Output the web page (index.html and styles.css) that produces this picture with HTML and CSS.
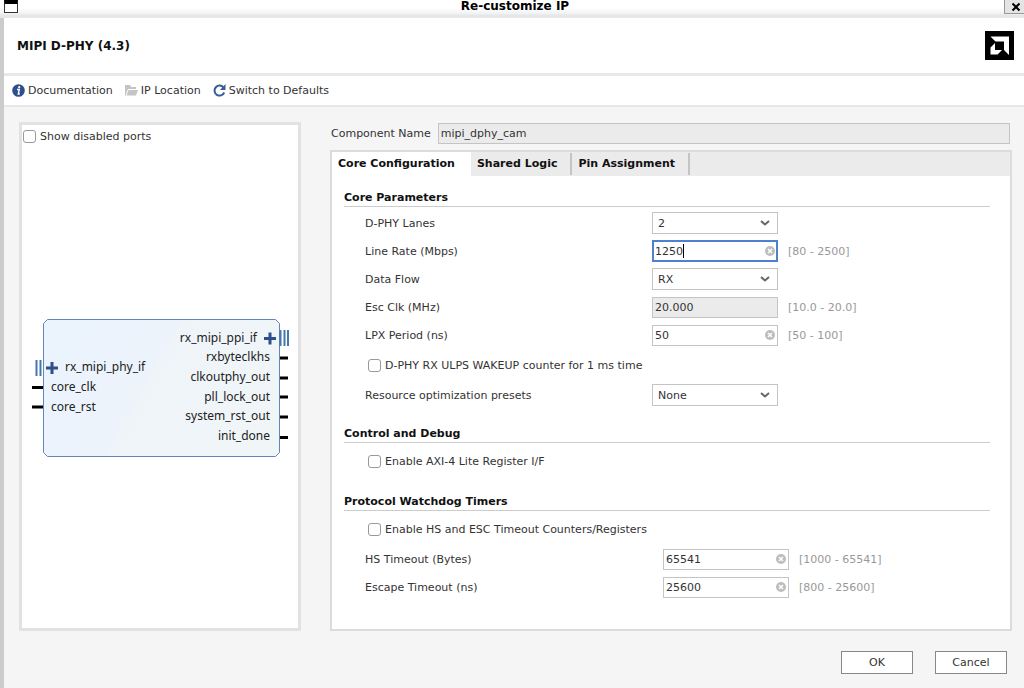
FILE: index.html
```html
<!DOCTYPE html>
<html lang="en">
<head>
    <meta charset="UTF-8">
    <meta name="viewport" content="width=device-width, initial-scale=1.0">
    <title>Re-customize IP</title>
    <link rel="stylesheet" href="styles.css">
</head>
<body>
    <header class="titlebar">
        <span class="window-menu"></span>
        <h1 class="window-title">Re-customize IP</h1>
        <button class="window-close" type="button" aria-label="Close">
            <svg width="10" height="10" viewBox="0 0 10 10"><path d="M1.500 1.500L8.500 8.500M8.500 1.500L1.500 8.500" stroke="#000" stroke-width="2"/></svg>
        </button>
    </header>

    <div class="dialog">
        <section class="product">
            <h2>MIPI D-PHY (4.3)</h2>
            <svg class="logo" width="29" height="29" viewBox="0 0 29 29">
                <rect width="29" height="29" fill="#000"/>
                <path d="M5.500 5.500H24V24L19 19V10.500H10.500Z" fill="#fff"/>
                <path d="M10 12V19H17L12.500 23.500H5.500V16.500Z" fill="#fff"/>
            </svg>
        </section>

        <nav class="toolbar">
            <a href="#documentation">
                <svg width="13" height="13" viewBox="0 0 13 13"><circle cx="6.500" cy="6.500" r="6.300" fill="#2f4e8c"/><circle cx="7.200" cy="3.200" r="1.100" fill="#fff"/><path d="M5 5.500H7.300L6.300 10H7.800" fill="none" stroke="#fff" stroke-width="1.400"/></svg>
                Documentation
            </a>
            <a href="#location">
                <svg width="13" height="11" viewBox="0 0 13 11"><path d="M0 0H5L6 2H11V4H3L1 9V10.500H0Z" fill="#c4c4c4"/><path d="M3.500 5H13L11 10.500H1.500Z" fill="#c4c4c4"/></svg>
                IP Location
            </a>
            <a href="#defaults">
                <svg width="13" height="13" viewBox="0 0 13 13"><path d="M10.500 3.500A5 5 0 1 0 11.200 8.500" fill="none" stroke="#3a5c9c" stroke-width="2"/><path d="M12.500 0V6H7Z" fill="#3a5c9c"/></svg>
                Switch to Defaults
            </a>
        </nav>

        <main class="content">
            <section class="preview">
                <label class="check"><input type="checkbox"> Show disabled ports</label>
                <div class="canvas">
                    <svg class="symbol" width="258" height="140" viewBox="0 0 258 140">
                        <defs>
                            <linearGradient id="fill" gradientUnits="userSpaceOnUse" x1="13" y1="20" x2="210" y2="130">
                                <stop offset="0" stop-color="#ebf3fd"/>
                                <stop offset="0.490" stop-color="#ecf3fb"/>
                                <stop offset="0.500" stop-color="#eff4f9"/>
                                <stop offset="1" stop-color="#f0f5f8"/>
                            </linearGradient>
                        </defs>
                        <path d="M16.500 1.500H244.500L248.500 5.500V134.500L244.500 138.500H16.500L12.500 134.500V5.500Z" fill="url(#fill)" stroke="#6384bd"/>
                        <!-- bus ports -->
                        <path d="M5.500 42V58M9.500 42V58M249.500 12V28M253.500 12V28M257 12V28" stroke="#4677ad" stroke-width="2"/>
                        <path d="M15 50H27M21 44V56M233 20.500H245M239 14.500V26.500" stroke="#2f4e8c" stroke-width="3"/>
                        <!-- single pins -->
                        <path d="M1 69.500H12M1 89H12M249 40H257M249 60H257M249 79H257M249 99H257M249 119.500H257" stroke="#000" stroke-width="3"/>
                        <g class="port">
                            <text x="34" y="53">rx_mipi_phy_if</text>
                            <text x="20" y="73">core_clk</text>
                            <text x="20" y="93">core_rst</text>
                        </g>
                        <g class="port port-out">
                            <text x="226" y="24">rx_mipi_ppi_if</text>
                            <text x="239" y="43">rxbyteclkhs</text>
                            <text x="239" y="63">clkoutphy_out</text>
                            <text x="239" y="83">pll_lock_out</text>
                            <text x="239" y="102">system_rst_out</text>
                            <text x="239" y="122">init_done</text>
                        </g>
                    </svg>
                </div>
            </section>

            <section class="settings">
                <div class="component">
                    <label for="component">Component Name</label>
                    <input class="field" id="component" type="text" value="mipi_dphy_cam" readonly>
                </div>

                <div class="tab-panel">
                    <div class="tabs">
                        <button class="tab active" type="button">Core Configuration</button>
                        <button class="tab" type="button">Shared Logic</button>
                        <button class="tab" type="button">Pin Assignment</button>
                    </div>

                    <form class="groups">
                        <section class="group">
                            <h3>Core Parameters</h3>
                            <div class="row">
                                <label for="lanes">D-PHY Lanes</label>
                                <div class="control">
                                    <select class="field" id="lanes"><option>1</option><option selected>2</option><option>4</option></select>
                                    <svg class="arrow" width="10" height="6" viewBox="0 0 10 6"><path d="M1 1L5 4.500L9 1" fill="none" stroke="#666" stroke-width="2"/></svg>
                                </div>
                            </div>
                            <div class="row">
                                <label for="rate">Line Rate (Mbps)</label>
                                <div class="control focused">
                                    <input class="field" id="rate" type="text" value="1250">
                                    <span class="caret"></span>
                                    <button class="clear" type="button" aria-label="Clear"><svg width="10" height="10" viewBox="0 0 10 10"><circle cx="5" cy="5" r="5" fill="#bdbdbd"/><path d="M3 3L7 7M7 3L3 7" stroke="#fff" stroke-width="1.500"/></svg></button>
                                </div>
                                <span class="range">[80 - 2500]</span>
                            </div>
                            <div class="row">
                                <label for="flow">Data Flow</label>
                                <div class="control">
                                    <select class="field" id="flow"><option>RX</option><option>TX</option></select>
                                    <svg class="arrow" width="10" height="6" viewBox="0 0 10 6"><path d="M1 1L5 4.500L9 1" fill="none" stroke="#666" stroke-width="2"/></svg>
                                </div>
                            </div>
                            <div class="row">
                                <label for="esc">Esc Clk (MHz)</label>
                                <div class="control">
                                    <input class="field" id="esc" type="text" value="20.000" readonly>
                                </div>
                                <span class="range">[10.0 - 20.0]</span>
                            </div>
                            <div class="row">
                                <label for="lpx">LPX Period (ns)</label>
                                <div class="control">
                                    <input class="field" id="lpx" type="text" value="50">
                                    <button class="clear" type="button" aria-label="Clear"><svg width="10" height="10" viewBox="0 0 10 10"><circle cx="5" cy="5" r="5" fill="#bdbdbd"/><path d="M3 3L7 7M7 3L3 7" stroke="#fff" stroke-width="1.500"/></svg></button>
                                </div>
                                <span class="range">[50 - 100]</span>
                            </div>
                            <label class="check"><input type="checkbox"> D-PHY RX ULPS WAKEUP counter for 1 ms time</label>
                            <div class="row">
                                <label for="presets">Resource optimization presets</label>
                                <div class="control">
                                    <select class="field" id="presets"><option>None</option></select>
                                    <svg class="arrow" width="10" height="6" viewBox="0 0 10 6"><path d="M1 1L5 4.500L9 1" fill="none" stroke="#666" stroke-width="2"/></svg>
                                </div>
                            </div>
                        </section>

                        <section class="group">
                            <h3>Control and Debug</h3>
                            <label class="check"><input type="checkbox"> Enable AXI-4 Lite Register I/F</label>
                        </section>

                        <section class="group timers">
                            <h3>Protocol Watchdog Timers</h3>
                            <label class="check"><input type="checkbox"> Enable HS and ESC Timeout Counters/Registers</label>
                            <div class="row">
                                <label for="hs">HS Timeout (Bytes)</label>
                                <div class="control">
                                    <input class="field" id="hs" type="text" value="65541">
                                    <button class="clear" type="button" aria-label="Clear"><svg width="10" height="10" viewBox="0 0 10 10"><circle cx="5" cy="5" r="5" fill="#bdbdbd"/><path d="M3 3L7 7M7 3L3 7" stroke="#fff" stroke-width="1.500"/></svg></button>
                                </div>
                                <span class="range">[1000 - 65541]</span>
                            </div>
                            <div class="row">
                                <label for="escape">Escape Timeout (ns)</label>
                                <div class="control">
                                    <input class="field" id="escape" type="text" value="25600">
                                    <button class="clear" type="button" aria-label="Clear"><svg width="10" height="10" viewBox="0 0 10 10"><circle cx="5" cy="5" r="5" fill="#bdbdbd"/><path d="M3 3L7 7M7 3L3 7" stroke="#fff" stroke-width="1.500"/></svg></button>
                                </div>
                                <span class="range">[800 - 25600]</span>
                            </div>
                        </section>
                    </form>
                </div>
            </section>
        </main>

        <footer class="actions">
            <button type="button">OK</button>
            <button type="button">Cancel</button>
        </footer>
    </div>
</body>
</html>
```
FILE: styles.css
```css
html{
    box-sizing: border-box;
    font-family: "DejaVu Sans", sans-serif;
    font-size: 11px;
    color: #333;
}

*, *::after, *::before{
    box-sizing: inherit;
}

body{
    display: flex;
    flex-direction: column;
    min-height: 100vh;
    margin: 0;
}

h1, h2, h3{
    margin: 0;
    color: #111;
}

button, input, select{
    font: inherit;
    color: inherit;
    margin: 0;
}

svg{
    display: block;
}

/* Title bar */
.titlebar{
    display: flex;
    justify-content: space-between;
    align-items: flex-start;
    height: 18px;
    padding-left: 4px;
    background: linear-gradient(#fff 8px, #eff1f4 14px, #e6e7e6 15px);
}

.window-menu{
    width: 14px;
    height: 13px;
    border: 1px solid #333;
    border-top: 4px solid #000;
    background-color: #fff;
}

.window-title{
    padding-left: 8px;
    font-size: 12px;
    line-height: 12px;
    color: #000;
}

.window-close{
    display: flex;
    justify-content: center;
    align-items: center;
    width: 20px;
    height: 14px;
    padding: 0 0 0 3px;
    border: 1px solid #999;
    border-width: 0 0 1px 1px;
    background-color: #e4e4e4;
}

/* Dialog */
.dialog{
    display: flex;
    flex-direction: column;
    flex-grow: 1;
    border-left: 4px solid #ccc;
    background-color: #f5f5f5;
}

.product{
    display: flex;
    justify-content: space-between;
    align-items: center;
    height: 58px;
    padding: 0 10px 0 13px;
    border-bottom: 3px solid #e8e8e8;
    background-color: #fff;
}

.product h2{
    font-size: 12px;
}

.toolbar{
    display: flex;
    align-items: center;
    gap: 12px;
    height: 31px;
    padding-left: 8px;
    border-bottom: 2px solid #e8e8e8;
    background-color: #fff;
}

.toolbar a{
    display: flex;
    align-items: center;
    gap: 3px;
    color: #333;
    text-decoration: none;
}

.content{
    display: flex;
    flex-grow: 1;
    gap: 29px;
    padding: 15px 12px 0 15px;
}

/* Symbol preview */
.preview{
    display: flex;
    flex-direction: column;
    flex: 0 0 282px;
    border: 3px solid #e2e2e2;
    background-color: #fff;
}

.canvas{
    display: flex;
    flex-grow: 1;
    justify-content: center;
    align-items: center;
}

.port{
    font-family: "Noto Sans", sans-serif;
    font-size: 12px;
    fill: #222;
}

.port-out{
    text-anchor: end;
}

.check{
    display: flex;
    align-items: center;
    gap: 4px;
    height: 22px;
    padding-left: 1px;
}

.check input{
    appearance: none;
    width: 13px;
    height: 13px;
    border: 1px solid #999;
    border-radius: 3px;
    background-color: #fff;
}

/* Settings */
.settings{
    display: flex;
    flex-direction: column;
    flex-grow: 1;
}

.component{
    display: flex;
    align-items: center;
    gap: 7px;
    height: 23px;
    padding: 0 2px 0 1px;
}

.component .field{
    flex-grow: 1;
}

.field{
    height: 21px;
    padding: 0 2px;
    border: 1px solid #c4c4c4;
    border-radius: 0;
    outline: 0;
    background-color: #fff;
}

.field:read-only:not(select){
    background-color: #ebebeb;
}

.tab-panel{
    flex-grow: 1;
    margin-top: 5px;
    border: 2px solid #dcdcdc;
    background-color: #fff;
}

.tabs{
    display: flex;
    align-items: center;
    height: 24px;
    background-color: #ebebeb;
}

.tab{
    height: 22px;
    padding: 0 13px 1px 6px;
    border: 0;
    border-right: 2px solid #c4c4c4;
    background: none;
    font-weight: bold;
    color: #111;
}

.tab.active{
    height: 24px;
    padding-right: 16px;
    border-right: 0;
    background-color: #fff;
}

.groups{
    padding: 12px 20px 0 12px;
}

.group{
    display: flex;
    flex-direction: column;
    margin-bottom: 15px;
}

.group h3{
    height: 19px;
    margin-bottom: 2px;
    border-bottom: 1px solid #ccc;
    font-size: 11px;
    line-height: 20px;
}

.row{
    display: flex;
    align-items: center;
    height: 28px;
    padding-left: 21px;
}

.row label{
    width: 287px;
}

.timers .row label{
    width: 298px;
}

.group .check{
    height: 28px;
    margin: 2px 0;
    padding-left: 24px;
}

.control{
    position: relative;
    width: 126px;
}

.control .field{
    display: block;
    width: 100%;
}

.control select.field{
    appearance: none;
    height: 22px;
    padding-left: 5px;
}

.focused .field{
    height: 22px;
    border: 2px solid #5080d0;
    padding-left: 1px;
    caret-color: transparent;
}

.caret{
    position: absolute;
    left: 31px;
    top: 4px;
    width: 1px;
    height: 14px;
    background-color: #000;
}

.arrow{
    position: absolute;
    right: 8px;
    top: 8px;
    pointer-events: none;
}

.clear{
    display: flex;
    align-items: center;
    position: absolute;
    right: 3px;
    top: 0;
    bottom: 0;
    padding: 0;
    border: 0;
    background: none;
}

.range{
    margin-left: 10px;
    color: #999;
}

/* Footer */
.actions{
    display: flex;
    justify-content: flex-end;
    gap: 22px;
    padding: 20px 17px 14px;
}

.actions button{
    width: 72px;
    height: 23px;
    padding: 0;
    border: 1px solid #888;
    background-color: #fff;
}
```
